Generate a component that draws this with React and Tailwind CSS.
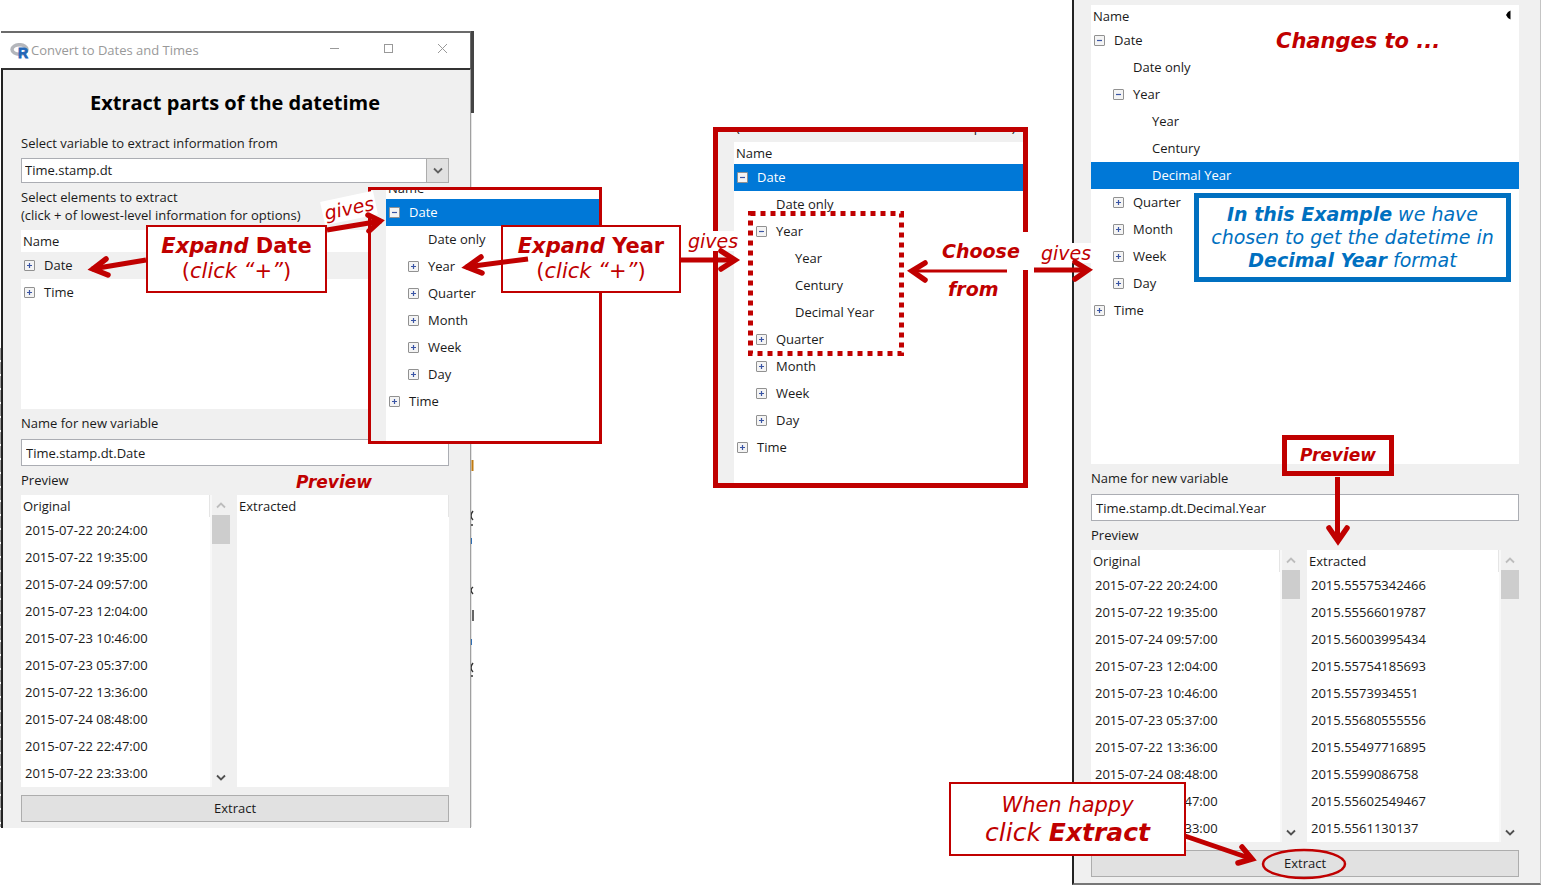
import React from "react";

const ORIGINAL = [
  "2015-07-22 20:24:00",
  "2015-07-22 19:35:00",
  "2015-07-24 09:57:00",
  "2015-07-23 12:04:00",
  "2015-07-23 10:46:00",
  "2015-07-23 05:37:00",
  "2015-07-22 13:36:00",
  "2015-07-24 08:48:00",
  "2015-07-22 22:47:00",
  "2015-07-22 23:33:00",
];

const DECIMAL = [
  "2015.55575342466",
  "2015.55566019787",
  "2015.56003995434",
  "2015.55754185693",
  "2015.5573934551",
  "2015.55680555556",
  "2015.55497716895",
  "2015.5599086758",
  "2015.55602549467",
  "2015.5561130137",
];

const REST = [
  { level: 1, label: "Quarter", toggle: "+" },
  { level: 1, label: "Month", toggle: "+" },
  { level: 1, label: "Week", toggle: "+" },
  { level: 1, label: "Day", toggle: "+" },
  { level: 0, label: "Time", toggle: "+" },
];

const COLLAPSED = [
  { level: 0, label: "Date", toggle: "+", state: "hover" },
  { level: 0, label: "Time", toggle: "+" },
];

const DATE_OPEN = [
  { level: 0, label: "Date", toggle: "-", state: "selected" },
  { level: 1, label: "Date only" },
  { level: 1, label: "Year", toggle: "+" },
  ...REST,
];

const YEAR_OPEN = [
  { level: 0, label: "Date", toggle: "-", state: "selected" },
  { level: 1, label: "Date only" },
  { level: 1, label: "Year", toggle: "-" },
  { level: 2, label: "Year" },
  { level: 2, label: "Century" },
  { level: 2, label: "Decimal Year" },
  ...REST,
];

const DECIMAL_CHOSEN = [
  { level: 0, label: "Date", toggle: "-" },
  { level: 1, label: "Date only" },
  { level: 1, label: "Year", toggle: "-" },
  { level: 2, label: "Year" },
  { level: 2, label: "Century" },
  { level: 2, label: "Decimal Year", state: "selected" },
  ...REST,
];

const INDENT = ["pl-[3px]", "pl-[22px]", "pl-[41px]"];
const ROW_STATE = {
  selected: "bg-[#0078d7] text-white",
  hover: "bg-[#f0f0f0]",
};

function Toggle({ sign, label }) {
  return (
    <button
      type="button"
      aria-label={(sign === "+" ? "Expand " : "Collapse ") + label}
      className="block size-[11px] shrink-0"
    >
      <svg viewBox="0 0 11 11" className="block size-[11px]">
        <rect x="0.5" y="0.5" width="10" height="10" rx="0.5" fill="#f4f4f4" stroke="#919191" />
        <path d={sign === "+" ? "M3 5.5H8M5.5 3V8" : "M3 5.5H8"} stroke="#3a55a5" strokeWidth="1.2" />
      </svg>
    </button>
  );
}

function Tree({ rows, arrow = false, className = "" }) {
  return (
    <div className={"min-w-0 bg-white " + className}>
      <div className="flex h-[22px] items-center justify-between pt-[2px] pr-2 pl-[2px]">
        <span>Name</span>
        {arrow && (
          <svg viewBox="0 0 6 10" className="mb-1 h-[10px] w-[6px]">
            <path d="M5.500 0.500V9.500L3 8L1 5L3 2Z" fill="#000" />
          </svg>
        )}
      </div>
      <ul>
        {rows.map((r, i) => (
          <li
            key={i}
            className={
              "flex h-[27px] items-center gap-[9px] " + INDENT[r.level] + " " + (ROW_STATE[r.state] || "")
            }
          >
            {r.toggle ? <Toggle sign={r.toggle} label={r.label} /> : <span className="w-[11px]" />}
            <span>{r.label}</span>
          </li>
        ))}
      </ul>
    </div>
  );
}

function Chevron({ up = false, className }) {
  return (
    <svg viewBox="0 0 10 7" className={"h-[7px] w-[10px] " + className}>
      <path d={up ? "M1 5.500L5 1.500L9 5.500" : "M1 1.500L5 5.500L9 1.500"} fill="none" stroke="currentColor" strokeWidth="1.800" />
    </svg>
  );
}

function ScrollBar() {
  return (
    <div className="flex w-[18px] shrink-0 flex-col items-center justify-between bg-[#f0f0f0]">
      <div className="flex w-full flex-col items-center">
        <button type="button" aria-label="Scroll up" className="flex h-5 w-full items-center justify-center">
          <Chevron up className="text-[#bdbdbd]" />
        </button>
        <div className="h-[29px] w-full bg-[#cdcdcd]" />
      </div>
      <button type="button" aria-label="Scroll down" className="flex h-5 w-full items-center justify-center">
        <Chevron className="text-[#505050]" />
      </button>
    </div>
  );
}

function List({ title, rows, scroll, className }) {
  return (
    <div className={"flex min-h-[292px] " + className}>
      <div className="flex-1 bg-white">
        <table className="w-full text-left">
          <thead>
            <tr>
              <th className="h-[22px] border-r border-[#e5e5e5] p-0 pt-[2px] pl-[2px] font-normal">{title}</th>
            </tr>
          </thead>
          <tbody>
            {rows.map((r) => (
              <tr key={r}>
                <td className="h-[27px] p-0 pl-1">{r}</td>
              </tr>
            ))}
          </tbody>
        </table>
      </div>
      {scroll && (
        <>
          <div className="w-[2px] bg-[#f8f8f8]" />
          <ScrollBar />
        </>
      )}
    </div>
  );
}

function VariableForm({ id, name, extracted }) {
  return (
    <>
      <label htmlFor={id} className="flex h-[30px] items-center">
        Name for new variable
      </label>
      <input
        id={id}
        type="text"
        defaultValue={name}
        className="block h-[27px] w-full border border-[#abadb3] bg-white px-1 outline-none"
      />
      <div className="flex h-[29px] items-center">Preview</div>
      <div className="flex gap-[7px]">
        <List title="Original" rows={ORIGINAL} scroll className="w-[209px]" />
        <List title="Extracted" rows={extracted} scroll={extracted.length > 0} className="flex-1" />
      </div>
      <button
        type="button"
        className="mt-2 block h-[27px] w-full border border-[#adadad] bg-[#e1e1e1] text-center"
      >
        Extract
      </button>
    </>
  );
}

function RLogo() {
  return (
    <svg viewBox="0 0 20 16" className="h-4 w-5" aria-hidden="true">
      <ellipse cx="9.500" cy="6.500" rx="7.500" ry="4.800" fill="none" stroke="#b4b6bb" strokeWidth="3.500" />
      <text x="8" y="14.500" fontFamily="Liberation Sans" fontWeight="700" fontSize="14" fill="#2467b8" stroke="#2467b8" strokeWidth="0.800">
        R
      </text>
    </svg>
  );
}

function DialogWindow() {
  return (
    <section className="absolute top-[31px] left-px w-[470px]">
      <header className="flex h-[37px] items-center border-t-2 border-r border-[#6b6b6b] bg-white pr-[22px] pl-[9px] text-[#999]">
        <RLogo />
        <h1 className="flex-1 pl-px text-[13px]">Convert to Dates and Times</h1>
        <div className="flex items-center gap-[43px] pb-1">
          <button type="button" aria-label="Minimize">
            <svg viewBox="0 0 11 11" className="size-[11px]"><path d="M1 5.500H10" stroke="#999" /></svg>
          </button>
          <button type="button" aria-label="Maximize">
            <svg viewBox="0 0 11 11" className="size-[11px]"><rect x="1.500" y="1.500" width="8" height="8" fill="none" stroke="#999" /></svg>
          </button>
          <button type="button" aria-label="Close">
            <svg viewBox="0 0 11 11" className="size-[11px]"><path d="M1 1L10 10M10 1L1 10" stroke="#999" /></svg>
          </button>
        </div>
      </header>
      <div className="border-t-2 border-r border-l-2 border-t-[#333] border-r-[#a0a0a0] border-l-[#222] bg-[#f0f0f0] pr-[21px] pb-[6px] pl-[18px]">
        <h2 className="pt-[19px] pb-3 text-center text-xl leading-7 font-bold text-black">
          Extract parts of the datetime
        </h2>
        <label htmlFor="source" className="flex h-[29px] items-center">
          Select variable to extract information from
        </label>
        <div className="relative">
          <select
            id="source"
            className="block h-[25px] w-full appearance-none border border-[#abadb3] bg-white px-[3px] outline-none"
          >
            <option>Time.stamp.dt</option>
          </select>
          <span className="pointer-events-none absolute inset-y-0 right-0 flex w-[23px] items-center justify-center border border-[#adadad] bg-[#e1e1e1]">
            <Chevron className="text-[#606060]" />
          </span>
        </div>
        <p className="pt-[5px] pb-[6px] leading-[18px]">
          Select elements to extract
          <br />
          (click + of lowest-level information for options)
        </p>
        <Tree rows={COLLAPSED} className="min-h-[179px]" />
        <VariableForm id="name-date" name="Time.stamp.dt.Date" extracted={[]} />
      </div>
    </section>
  );
}

function Callout({ className, children }) {
  return (
    <div className={"absolute border-2 border-[#c00000] bg-white text-center font-['DejaVu_Sans',sans-serif] text-[#c00000] " + className}>
      {children}
    </div>
  );
}

function Note({ className, children }) {
  return (
    <div className={"absolute font-['DejaVu_Sans',sans-serif] whitespace-nowrap italic text-[#c00000] " + className}>
      {children}
    </div>
  );
}

function Arrow({ d, head, width = 5 }) {
  return (
    <g fill="none" stroke="#c00000" strokeLinejoin="miter">
      <path d={d} strokeWidth={width} />
      <path d={head} strokeWidth="5.500" strokeLinecap="round" />
    </g>
  );
}

export default function App() {
  return (
    <main className="relative min-h-screen w-full overflow-hidden bg-white font-['Open_Sans','Noto_Sans',sans-serif] text-[13px] text-[#1a1a1a]">
      <svg className="absolute top-0 left-0 h-[885px] w-[1541px]" aria-hidden="true">
        <rect x="470" y="31" width="4" height="82" fill="#444" />
        <rect x="470" y="113" width="2" height="714" fill="#e4e4e4" />
        <path d="M0.500 348V827" stroke="#9a9a9a" strokeDasharray="12 2" />
        <path d="M472.500 460V471" stroke="#c07a10" strokeWidth="2" />
        <path d="M473 511Q469 516 473 520M473 525H470M473 587Q469 590 473 594M473 610V621M473 663Q469 668 473 672M473 676H470" stroke="#333" fill="none" strokeWidth="1.500" />
        <path d="M471 538V544M471 639V645" stroke="#2f6fb5" strokeWidth="2" />
      </svg>

      <DialogWindow />

      <section className="absolute top-0 left-[1072px] min-h-screen w-[469px] border-r border-b-2 border-l-2 border-r-[#c4c4c4] border-b-[#777] border-l-[#222] bg-[#f0f0f0] pt-[5px] pr-[21px] pb-[6px] pl-[17px]">
        <Tree rows={DECIMAL_CHOSEN} arrow className="min-h-[459px]" />
        <VariableForm id="name-decimal" name="Time.stamp.dt.Decimal.Year" extracted={DECIMAL} />
      </section>

      <section className="absolute top-[187px] left-[368px] w-[234px] border-3 border-[#c00000] bg-[#f0f0f0] pl-[15px]">
        <div className="overflow-hidden">
          <Tree rows={DATE_OPEN} className="-mt-[13px] pb-[26px]" />
        </div>
      </section>

      <section className="absolute top-[127px] left-[713px] w-[315px] border-5 border-[#c00000] bg-[#f0f0f0] pl-4">
        <div className="flex h-[10px] items-start overflow-hidden whitespace-nowrap">
          <span className="-mt-[14px] pl-[2px] leading-[18px]">(click + of lowest-level information for options)</span>
        </div>
        <Tree rows={YEAR_OPEN} className="pb-[22px]" />
      </section>

      <Note className="top-[232px] left-[938px] h-[38px] bg-white px-1 pr-[14px] text-[19px] leading-[38px] font-bold">Choose</Note>
      <Note className="top-[277px] left-[948px] text-[19px] leading-6 font-bold">from</Note>
      <Note className="top-[196px] left-[322px] -rotate-12 bg-white px-[2px] text-[19px] leading-6">gives</Note>
      <Note className="top-[231px] left-[686px] bg-white px-[2px] text-[19px] leading-5">gives</Note>
      <Note className="top-[243px] left-[1039px] bg-white px-[2px] text-[19px] leading-5">gives</Note>
      <Note className="top-[28px] left-[1276px] text-[21px] leading-[26px] font-bold">Changes to ...</Note>
      <Note className="top-[472px] left-[296px] text-[17px] leading-5 font-bold">Preview</Note>

      <Callout className="top-[225px] left-[146px] w-[181px] py-[7px] text-[21px] leading-[25px]">
        <p><b><i>Expand</i> Date</b></p>
        <p>(<i>click “+”</i>)</p>
      </Callout>
      <Callout className="top-[225px] left-[501px] w-[180px] py-[7px] text-[21px] leading-[25px]">
        <p><b><i>Expand</i> Year</b></p>
        <p>(<i>click “+”</i>)</p>
      </Callout>
      <Callout className="top-[782px] left-[949px] w-[237px] py-[7px] leading-7 italic">
        <p className="text-[21px]">When happy</p>
        <p className="text-[25px]">click <b>Extract</b></p>
      </Callout>
      <div className="absolute top-[193px] left-[1194px] w-[317px] border-5 border-[#0070c0] bg-white py-[5px] text-center font-['DejaVu_Sans',sans-serif] text-[19px] leading-[23px] text-[#0070c0] italic">
        <p><b>In this Example</b> we have</p>
        <p>chosen to get the datetime in</p>
        <p><b>Decimal Year</b> format</p>
      </div>
      <div className="absolute top-[435px] left-[1282px] w-[112px] border-5 border-[#c00000] py-[5px] text-center font-['DejaVu_Sans',sans-serif] text-[17px] leading-[21px] font-bold text-[#c00000] italic">
        Preview
      </div>

      <svg className="pointer-events-none absolute top-0 left-0 h-[885px] w-[1541px]" aria-hidden="true">
        <rect x="750.500" y="213.500" width="151" height="140" fill="none" stroke="#c00000" strokeWidth="5" strokeDasharray="5 5" />
        <Arrow d="M146 260L92 269" head="M106 259L93 269L108 275" />
        <Arrow d="M327 230L381 221" head="M368 215L380 221L369 231" />
        <Arrow d="M528 259L466 267" head="M481 257L467 267L482 273" />
        <Arrow d="M681 260H735" head="M721 251L735 260L721 269" />
        <Arrow d="M1007 271H911" head="M925 263L912 271L925 280" width={3} />
        <Arrow d="M1034 270H1088" head="M1075 262L1088 270L1075 279" />
        <Arrow d="M1337.500 477V541" head="M1329 528L1338 541L1347 528" />
        <Arrow d="M1185 836L1252 859" head="M1242 847L1252 859L1238 863" />
        <ellipse cx="1304" cy="864" rx="41" ry="14" fill="none" stroke="#c00000" strokeWidth="2.500" />
      </svg>
    </main>
  );
}
